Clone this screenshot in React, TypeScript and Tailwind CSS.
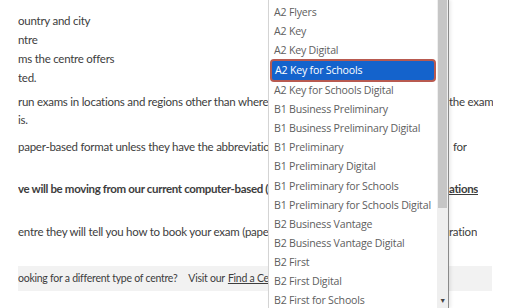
const options = [
  'A2 Flyers',
  'A2 Key',
  'A2 Key Digital',
  'A2 Key for Schools',
  'A2 Key for Schools Digital',
  'B1 Business Preliminary',
  'B1 Business Preliminary Digital',
  'B1 Preliminary',
  'B1 Preliminary Digital',
  'B1 Preliminary for Schools',
  'B1 Preliminary for Schools Digital',
  'B2 Business Vantage',
  'B2 Business Vantage Digital',
  'B2 First',
  'B2 First Digital',
  'B2 First for Schools',
];

const SELECTED = 'A2 Key for Schools';

// page text is cut by the open list: keep the left part to x=268, resume at x=449
function Line({ left, right, className = '' }: { left: React.ReactNode; right?: React.ReactNode; className?: string }) {
  return (
    <div className={`flex whitespace-nowrap ${className}`}>
      <div className="w-[250px] shrink-0 overflow-hidden">{left}</div>
      {right && <div className="ml-[181px] overflow-hidden">{right}</div>}
    </div>
  );
}

function ExamDropdown() {
  return (
    <div className="absolute left-[268px] top-0 flex h-[308px] w-[181px] border-l border-l-[#d4d4d4] border-r border-r-[#8a8a8a] bg-white font-['Open_Sans',sans-serif] text-[10.6px] tracking-[-0.2px] text-[#606060] shadow-[2px_0_3px_rgba(0,0,0,0.08)]">
      <ul className="flex-1 overflow-hidden whitespace-nowrap pt-[3px]">
        {options.map((o) =>
          o === SELECTED ? (
            <li key={o} className="mx-[1px] my-[-1px] rounded-[4px] border-2 border-[#b85a50] bg-[#1463cc] pl-[3px] leading-[19px] text-white">
              {o}
            </li>
          ) : (
            <li key={o} className="pl-[5px] leading-[19.07px]">
              {o}
            </li>
          )
        )}
      </ul>
      <div className="flex w-[11px] flex-col bg-[#efefef]">
        <div className="mx-[1px] h-[208px] bg-[#c6c6c6]" />
        <div className="flex-1" />
        <div className="flex h-[14px] items-center justify-center text-[7px] text-[#444]">▼</div>
      </div>
    </div>
  );
}

export default function App() {
  return (
    <div className="relative h-[308px] w-[509px] overflow-hidden bg-white font-['Lato',sans-serif] text-[11.5px] tracking-[-0.25px] text-[#3d3d3d]">
      <div className="pl-[18px] pt-[11px]">
        <div className="leading-[19px]">
          <Line left="ountry and city" />
          <Line left="ntre" />
          <Line left="ms the centre offers" />
          <Line left="ted." />
        </div>
        <div className="mt-[6px] leading-[18px]">
          <Line left=" run exams in locations and regions other than where the" right="the exam" />
          <Line left=" is." />
        </div>
        <Line className="mt-[9px] leading-[18px]" left=" paper-based format unless they have the abbreviation 'C" right={<span className="pl-[4px]">for</span>} />
        <Line
          className="mt-[24px] font-bold leading-[18px] tracking-[-0.35px]"
          left="ve will be moving from our current computer-based (C"
          right={<span className="underline">ations</span>}
        />
        <Line className="mt-[25px] leading-[18px]" left="entre they will tell you how to book your exam (paper-bas" right="ration" />
        <div className="mr-[17px] mt-[25px] flex h-[25px] items-center whitespace-nowrap bg-[#f2f2f2] text-[10.5px]">
          <div className="flex w-[250px] overflow-hidden">
            <span>ooking for a different type of centre?</span>
            <span className="ml-[11px]">Visit our</span>
            <span className="ml-[3px] underline">Find a Ce</span>
          </div>
        </div>
      </div>
      <ExamDropdown />
    </div>
  );
}
